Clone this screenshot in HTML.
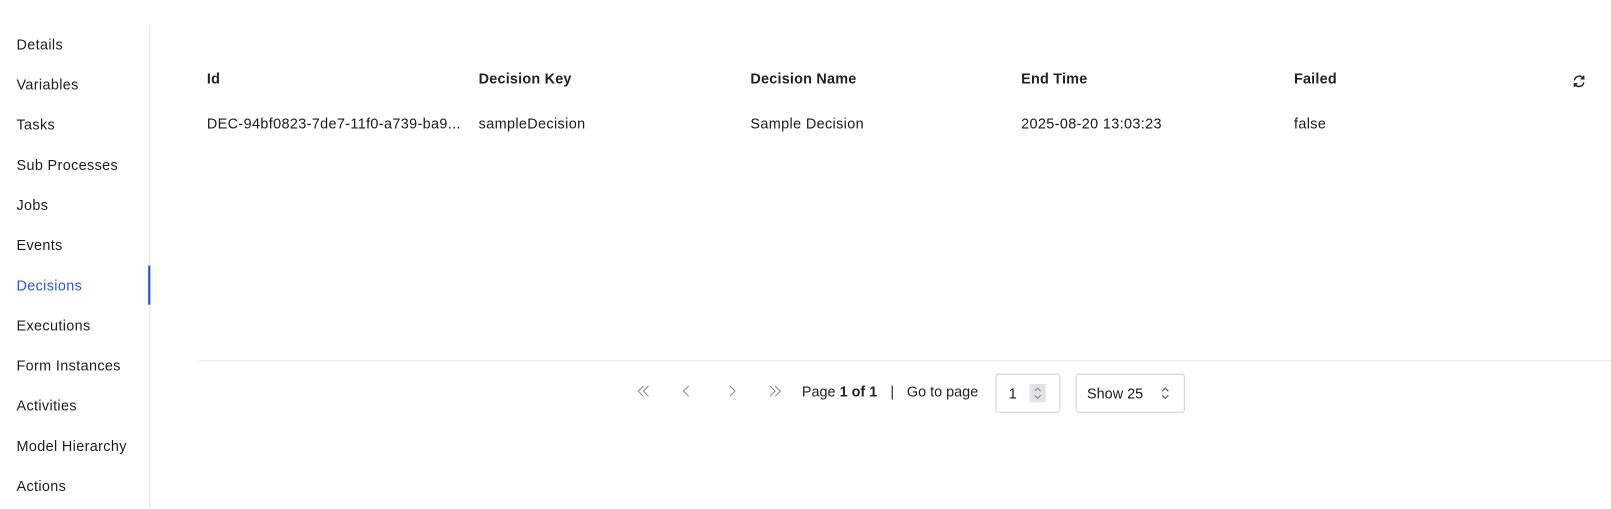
<!DOCTYPE html>
<html><head><style>
*{margin:0;padding:0;box-sizing:border-box}
body{width:1611px;height:504px;background:#fff;font-family:"Liberation Sans",sans-serif;color:#1a1a1a;position:relative;overflow:hidden;font-size:14px}
#w{position:absolute;left:0;top:0;width:1565px;height:490px;transform:scale(1.0294);transform-origin:0 0;letter-spacing:0.35px}
.side{position:absolute;left:0;top:24px;width:146px;height:470px;border-right:1px solid #e3e3e3}
.nav{position:absolute;left:16px;font-size:14px;color:#1d1d1d}
.nav.act{color:#2a55e0}
.bar{position:absolute;left:144px;top:258px;width:2px;height:38px;background:#2447d8}
.h{position:absolute;top:68px;font-weight:bold;font-size:14px;letter-spacing:0.2px;color:#222}
.c{position:absolute;top:112px;font-size:14px}
.line{position:absolute;left:193px;right:0;top:350px;border-top:1px solid #e6e6e6}
.pg{position:absolute;top:372px;font-size:14px;color:#222}
.box{position:absolute;top:363px;height:38px;border:1px solid #cfcfcf;border-radius:3px}
svg.ch{position:absolute;top:373px}
</style></head><body><div id="w">
<div class="side"></div>
<div class="nav" style="top:35px">Details</div>
<div class="nav" style="top:74px">Variables</div>
<div class="nav" style="top:113px">Tasks</div>
<div class="nav" style="top:152px">Sub Processes</div>
<div class="nav" style="top:191px">Jobs</div>
<div class="nav" style="top:230px">Events</div>
<div class="nav act" style="top:269px">Decisions</div>
<div class="nav" style="top:308px">Executions</div>
<div class="nav" style="top:347px">Form Instances</div>
<div class="nav" style="top:386px">Activities</div>
<div class="nav" style="top:425px">Model Hierarchy</div>
<div class="nav" style="top:464px">Actions</div>
<div class="bar"></div>

<div class="h" style="left:201px">Id</div>
<div class="h" style="left:465px">Decision Key</div>
<div class="h" style="left:729px">Decision Name</div>
<div class="h" style="left:992px">End Time</div>
<div class="h" style="left:1257px">Failed</div>
<svg style="position:absolute;left:1527px;top:72px" width="14" height="14" viewBox="0 0 14 14" fill="none" stroke="#222" stroke-width="1.4"><path d="M2.5 6A4.7 4.7 0 0 1 11 4"/><path d="M11.5 1.5V4.5H8.5"/><path d="M11.5 8A4.7 4.7 0 0 1 3 10"/><path d="M2.5 12.5V9.5H5.5"/></svg>

<div class="c" style="left:201px">DEC-94bf0823-7de7-11f0-a739-ba9...</div>
<div class="c" style="left:465px">sampleDecision</div>
<div class="c" style="left:729px">Sample Decision</div>
<div class="c" style="left:992px">2025-08-20 13:03:23</div>
<div class="c" style="left:1257px">false</div>

<div class="line"></div>
<svg class="ch" style="left:618px" width="14" height="14" viewBox="0 0 14 14" fill="none" stroke="#888" stroke-width="1"><path d="M7 2L2 7L7 12M12 2L7 7L12 12"/></svg>
<svg class="ch" style="left:662px" width="10" height="14" viewBox="0 0 10 14" fill="none" stroke="#888" stroke-width="1"><path d="M7 2L2 7L7 12"/></svg>
<svg class="ch" style="left:706px" width="10" height="14" viewBox="0 0 10 14" fill="none" stroke="#888" stroke-width="1"><path d="M3 2L8 7L3 12"/></svg>
<svg class="ch" style="left:746px" width="14" height="14" viewBox="0 0 14 14" fill="none" stroke="#888" stroke-width="1"><path d="M2 2L7 7L2 12M7 2L12 7L7 12"/></svg>
<div class="pg" style="left:779px;letter-spacing:0">Page <b>1 of 1</b></div>
<div class="pg" style="left:865px">|</div>
<div class="pg" style="left:881px;letter-spacing:0">Go to page</div>
<div class="box" style="left:967px;width:63px"><span style="position:absolute;left:12px;top:10px">1</span><svg style="position:absolute;left:32px;top:9px" width="16" height="18" viewBox="0 0 16 18"><rect width="16" height="18" rx="2" fill="#e4e4e8"/><path d="M5 7L8 4L11 7M5 11L8 14L11 11" fill="none" stroke="#888" stroke-width="1"/></svg></div>
<div class="box" style="left:1045px;width:106px"><span style="position:absolute;left:10px;top:10px;letter-spacing:0">Show 25</span><svg style="position:absolute;left:79px;top:9px" width="14" height="18" viewBox="0 0 14 18"><path d="M4 7L7 4L10 7M4 11L7 14L10 11" fill="none" stroke="#555" stroke-width="1.1"/></svg></div>
</div></body></html>
